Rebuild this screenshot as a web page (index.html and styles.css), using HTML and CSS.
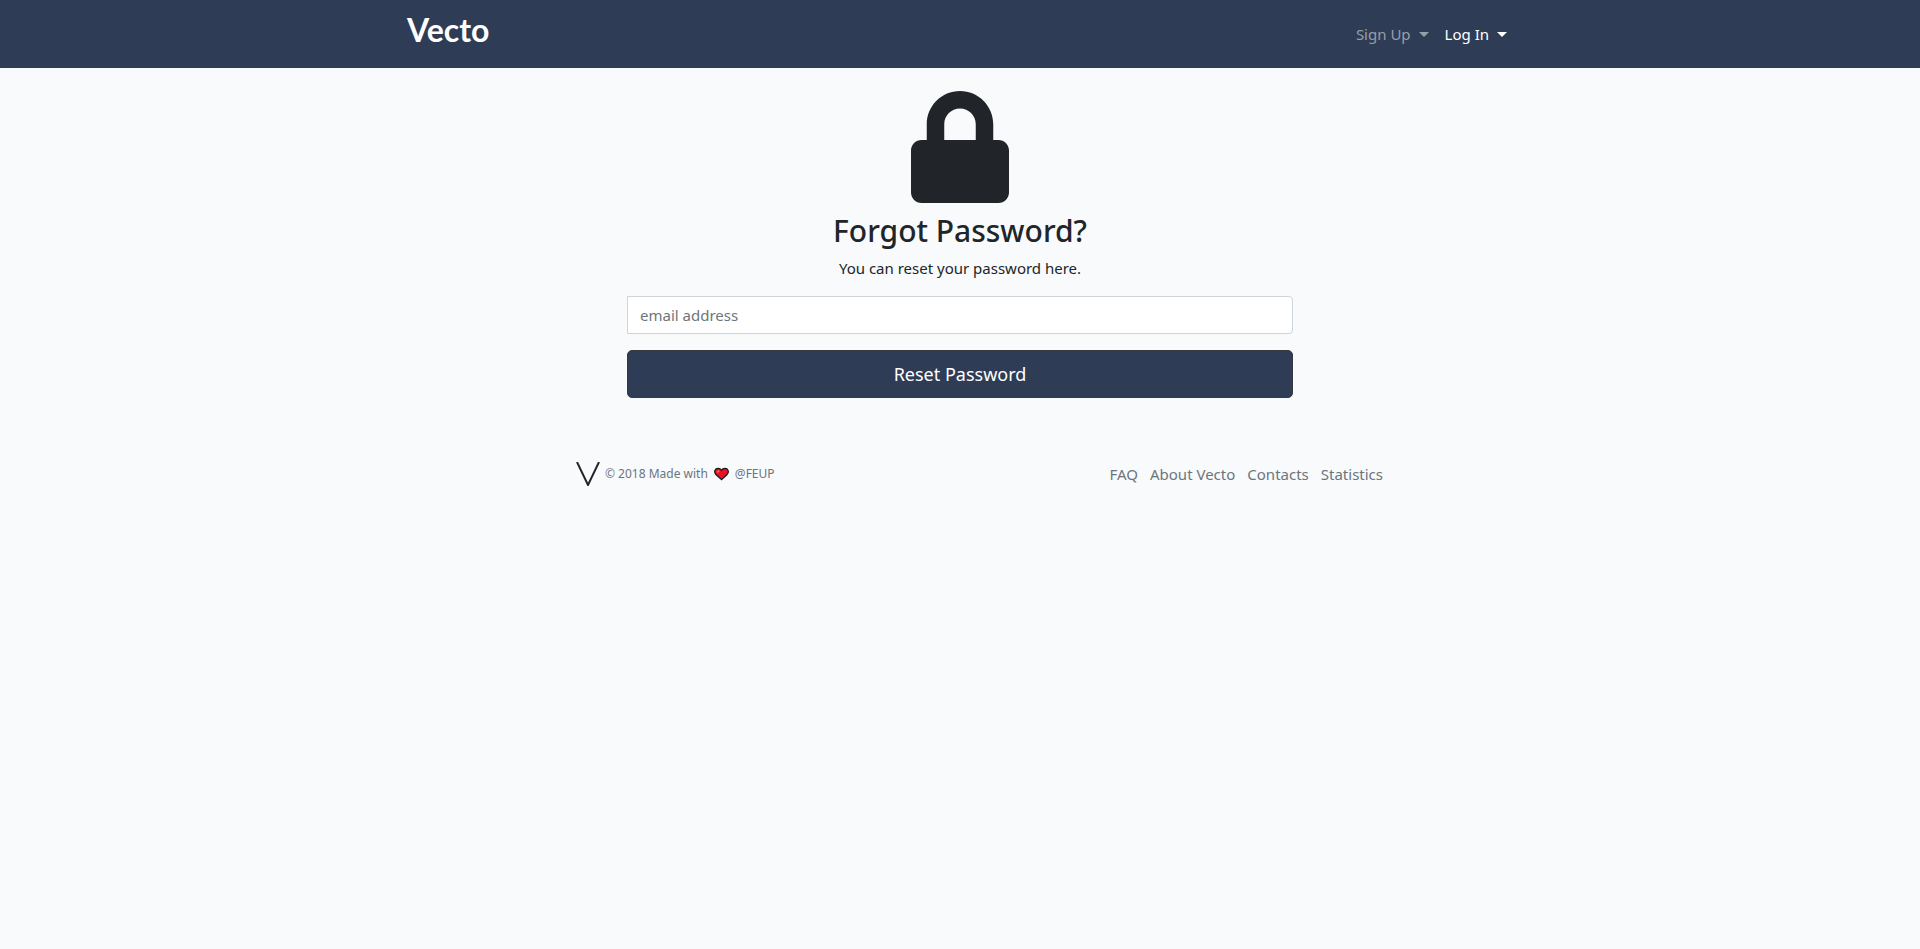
FILE: index.html
```html
<!DOCTYPE html>
<html lang="en">
<head>
<meta charset="utf-8">
<meta name="viewport" content="width=device-width, initial-scale=1">
<title>Vecto</title>
<link rel="stylesheet" href="styles.css">
</head>
<body>
<header class="navbar">
  <div class="navbar-inner">
    <a class="brand" href="#">Vecto</a>
    <nav class="nav">
      <button class="nav-toggle" type="button">Sign Up<span class="caret"></span></button>
      <button class="nav-toggle active" type="button">Log In<span class="caret"></span></button>
    </nav>
  </div>
</header>
<main class="panel">
  <svg class="lock" viewBox="0 0 448 512" aria-hidden="true"><path fill="currentColor" d="M400 224h-24v-72C376 68.200 307.800 0 224 0S72 68.200 72 152v72H48c-26.500 0-48 21.500-48 48v192c0 26.500 21.500 48 48 48h352c26.500 0 48-21.500 48-48V272c0-26.500-21.500-48-48-48zm-104 0H152v-72c0-39.700 32.300-72 72-72s72 32.300 72 72v72z"/></svg>
  <h1 class="title">Forgot Password?</h1>
  <p class="lead">You can reset your password here.</p>
  <form class="form">
    <input class="field" type="email" placeholder="email address" aria-label="email address">
    <button class="submit" type="button">Reset Password</button>
  </form>
</main>
<footer class="footer">
  <div class="credit">
    <svg class="mark" viewBox="0 0 24 24" aria-hidden="true"><path d="M1 0 12 23 23 0" fill="none" stroke="currentColor" stroke-width="2"/></svg>
    <small class="copy">© 2018 Made with
      <svg class="heart" viewBox="0 0 16 14" role="img" aria-label="love"><path d="M8 13 2 7.500C-.5 4.500 1 1 4.300 1 6 1 7.300 1.800 8 3c.7-1.200 2-2 3.700-2C15 1 16.500 4.500 14 7.500z" fill="#e81224" stroke="#17171a" stroke-width="1.300"/><path d="M3.500 5.500 5.500 3.300" stroke="#f4776c" stroke-width="1.500"/></svg>
      @FEUP</small>
  </div>
  <nav class="links">
    <a href="#">FAQ</a>
    <a href="#">About Vecto</a>
    <a href="#">Contacts</a>
    <a href="#">Statistics</a>
  </nav>
</footer>
</body>
</html>
```
FILE: styles.css
```css
* { box-sizing: border-box; }

body {
  margin: 0;
  background: #f8fafc;
  color: #212529;
  font-family: "Segoe UI", "Noto Sans", "Open Sans", sans-serif;
  font-size: 15px;
  line-height: 24px;
}

button, input { font: inherit; }

.navbar {
  padding: 8px 16px;
  background: #2f3c56;
}

.navbar-inner {
  display: flex;
  align-items: center;
  justify-content: space-between;
  max-width: 1110px;
  min-height: 52px;
  margin: 0 auto;
}

.brand {
  padding: 0 0 8px 2px;
  color: #fff;
  font-family: Lato, sans-serif;
  font-size: 32px;
  font-weight: 700;
  line-height: 40px;
  text-decoration: none;
}

.nav { display: flex; }

.nav-toggle {
  display: flex;
  align-items: center;
  gap: 8px;
  padding: 8px;
  border: 0;
  background: none;
  color: #979ea8;
}

.nav-toggle.active { color: #fff; }

.caret {
  border: 5px solid transparent;
  border-top-color: currentColor;
  border-bottom: 0;
}

.panel {
  display: flex;
  flex-direction: column;
  align-items: center;
  max-width: 666px;
  margin: 0 auto;
  padding-top: 23px;
}

.lock {
  width: 98px;
  height: 112px;
}

.title {
  margin: 9px 0 6px;
  font-size: 30px;
  font-weight: 500;
  line-height: 38px;
}

.lead { margin: 0 0 16px; }

.form {
  display: flex;
  flex-direction: column;
  gap: 16px;
  width: 100%;
}

.field {
  width: 100%;
  height: 38px;
  padding: 6px 12px;
  border: 1px solid #ced4da;
  border-radius: 0 4px 4px 0;
  background: #fff;
  color: #495057;
}

.field::placeholder { color: #6c757d; opacity: 1; }

.submit {
  padding: 8px 16px;
  border: 1px solid #343a40;
  border-radius: 5px;
  background: #2f3c56;
  color: #fff;
  font-size: 18px;
  line-height: 30px;
}

.footer {
  display: flex;
  align-items: center;
  justify-content: space-between;
  flex-wrap: wrap;
  max-width: 846px;
  margin: 0 auto;
  padding: 64px 0 24px 39px;
}

.credit {
  display: flex;
  align-items: center;
  gap: 5px;
}

.mark { width: 24px; height: 24px; }

.copy {
  display: flex;
  align-items: center;
  gap: 6px;
  color: #6c757d;
  font-size: 12px;
}

.heart { width: 15px; height: 14px; }

.links {
  display: flex;
  gap: 12px;
}

.links a {
  color: #6c757d;
  text-decoration: none;
}
```
